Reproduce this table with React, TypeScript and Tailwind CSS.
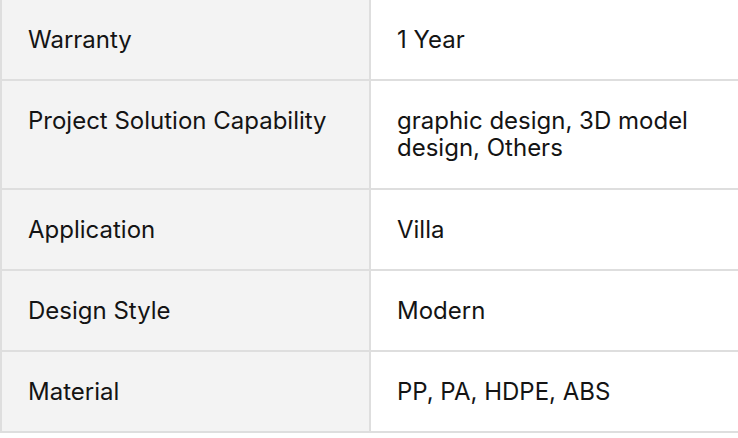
import React from 'react';

interface SpecRow {
  label: string;
  value: string;
  tall?: boolean;
}

const rows: SpecRow[] = [
  { label: 'Warranty', value: '1 Year' },
  { label: 'Project Solution Capability', value: 'graphic design, 3D model design, Others', tall: true },
  { label: 'Application', value: 'Villa' },
  { label: 'Design Style', value: 'Modern' },
  { label: 'Material', value: 'PP, PA, HDPE, ABS' },
];

export default function App() {
  return (
    <div
      className="w-[738px] h-[438px] bg-white overflow-hidden text-[24px] leading-[27px] text-[#141414]"
      style={{ fontFamily: 'Inter, "Noto Sans", sans-serif' }}
    >
      <div className="border-l-2 border-[#dedede]">
        {rows.map((row) => (
          <div
            key={row.label}
            className={`flex border-b-2 border-[#dedede] ${row.tall ? 'h-[109px]' : 'h-[81px]'}`}
          >
            <div className="w-[369px] shrink-0 bg-[#f3f3f3] border-r-2 border-[#dedede] pl-[26px] pt-[26px]">
              {row.label}
            </div>
            <div className="flex-1 pl-[26px] pr-[20px] pt-[26px]">{row.value}</div>
          </div>
        ))}
      </div>
    </div>
  );
}
